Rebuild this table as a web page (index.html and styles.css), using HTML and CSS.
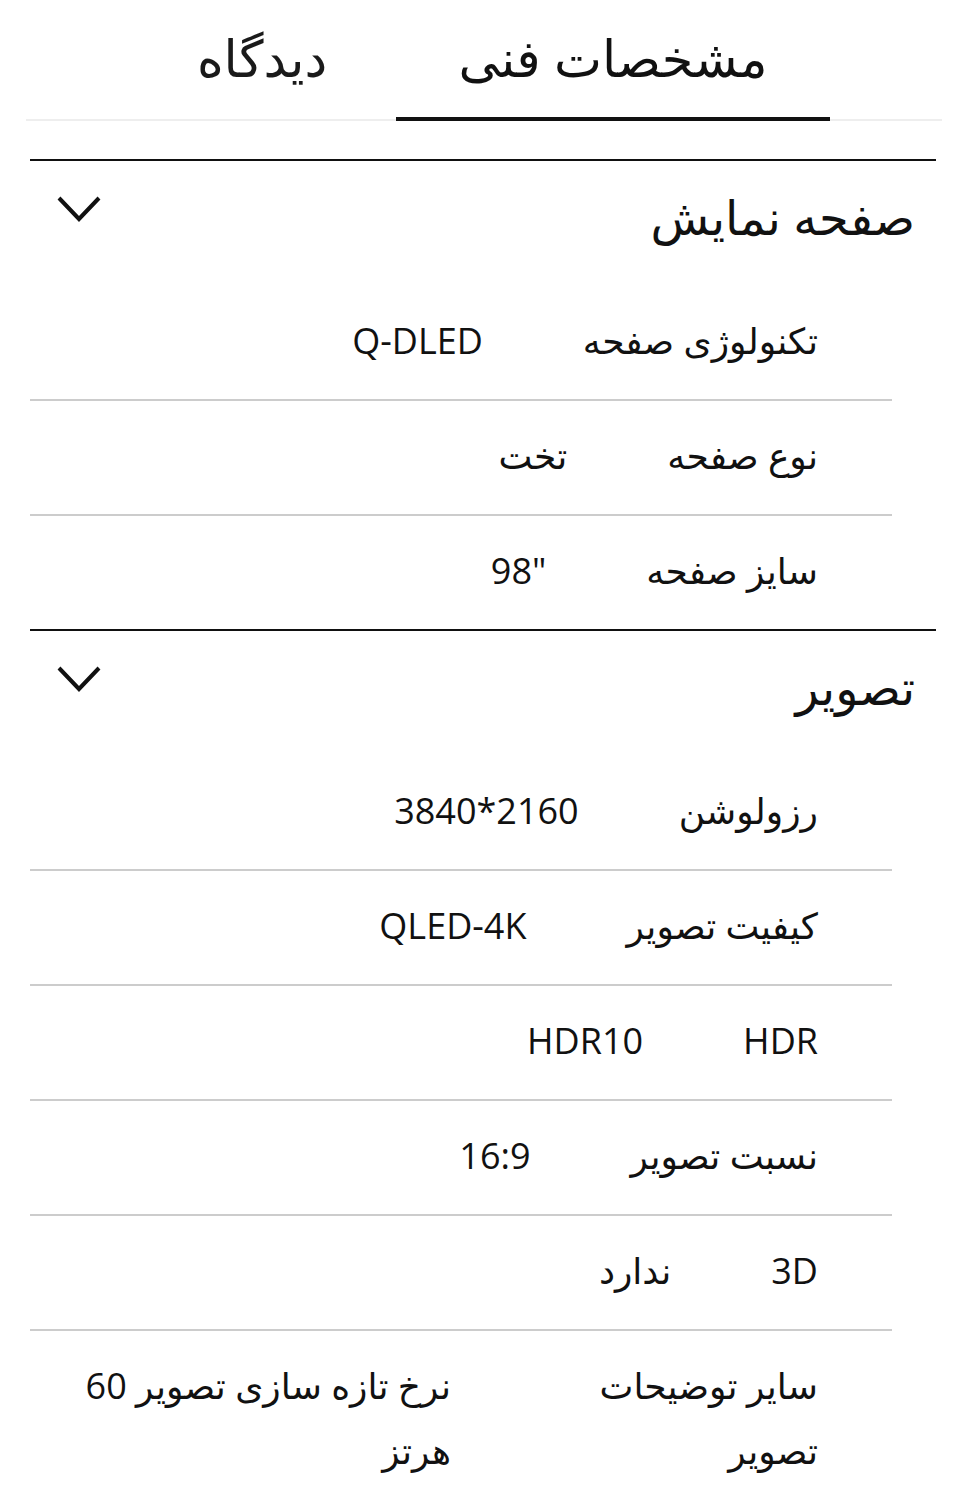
FILE: index.html
```html
<!DOCTYPE html>
<html lang="fa" dir="rtl">
<head>
<meta charset="utf-8">
<title>مشخصات فنی</title>
<link rel="stylesheet" href="styles.css">
</head>
<body>
<nav class="tabs">
  <div class="tab tab--active">مشخصات فنی</div>
  <div class="tab tab--plain">دیدگاه</div>
</nav>

<section class="spec">
  <header class="spec__head">
    <h2 class="spec__title">صفحه نمایش</h2>
    <svg class="chev" viewBox="0 0 44 28" width="44" height="28" aria-hidden="true"><path d="M2 3 L22 24 L42 3" fill="none" stroke="#111" stroke-width="4" stroke-linejoin="miter"/></svg>
  </header>
  <div class="row"><div class="row__label">تکنولوژی صفحه</div><div class="row__value">Q-DLED</div></div>
  <div class="row"><div class="row__label">نوع صفحه</div><div class="row__value">تخت</div></div>
  <div class="row"><div class="row__label">سایز صفحه</div><div class="row__value">"98</div></div>
</section>

<section class="spec">
  <header class="spec__head">
    <h2 class="spec__title">تصویر</h2>
    <svg class="chev" viewBox="0 0 44 28" width="44" height="28" aria-hidden="true"><path d="M2 3 L22 24 L42 3" fill="none" stroke="#111" stroke-width="4" stroke-linejoin="miter"/></svg>
  </header>
  <div class="row"><div class="row__label">رزولوشن</div><div class="row__value" dir="ltr">3840*2160</div></div>
  <div class="row"><div class="row__label">کیفیت تصویر</div><div class="row__value" dir="ltr">QLED-4K</div></div>
  <div class="row"><div class="row__label">HDR</div><div class="row__value">HDR10</div></div>
  <div class="row"><div class="row__label">نسبت تصویر</div><div class="row__value" dir="ltr">16:9</div></div>
  <div class="row"><div class="row__label">3D</div><div class="row__value">ندارد</div></div>
  <div class="row"><div class="row__label">سایر توضیحات تصویر</div><div class="row__value">نرخ تازه سازی تصویر 60 هرتز</div></div>
</section>
</body>
</html>
```

FILE: styles.css
```css
html, body {
  margin: 0;
  padding: 0;
  background: #ffffff;
}

body {
  direction: rtl;
  font-family: "Open Sans", "DejaVu Sans", sans-serif;
  color: #111111;
}

.tabs {
  display: flex;
  margin: 0 13px 0 26px;
  padding-right: 112px;
  border-bottom: 2px solid #eeeeee;
  height: 121px;
  box-sizing: border-box;
  align-items: stretch;
}

.tab {
  font-size: 51px;
  line-height: 1;
  text-align: center;
  padding-top: 32px;
  box-sizing: border-box;
}

.tab--active {
  width: 434px;
  border-bottom: 4px solid #111111;
  margin-bottom: -2px;
}

.tab--plain {
  width: 268px;
  color: #1a1a1a;
}

.spec {
  margin: 0 19px 0 30px;
  border-top: 2px solid #111111;
}

.tabs + .spec {
  margin-top: 38px;
}

.spec__head {
  display: flex;
  justify-content: space-between;
  align-items: flex-start;
  height: 125px;
  padding: 0 21px 0 27px;
}

.spec__title {
  margin: 0;
  font-size: 48px;
  font-weight: 400;
  line-height: 1;
  padding-top: 32px;
}

.chev {
  display: block;
  margin-top: 34px;
}

.row {
  display: flex;
  gap: 100px;
  margin-right: 44px;
  padding: 22px 74px 26px 48px;
  font-size: 36px;
  line-height: 65px;
  border-bottom: 2px solid #cccccc;
}

.row:last-child {
  border-bottom: none;
}

.row__label,
.row__value {
  flex: 0 1 auto;
  min-width: 0;
}
```
